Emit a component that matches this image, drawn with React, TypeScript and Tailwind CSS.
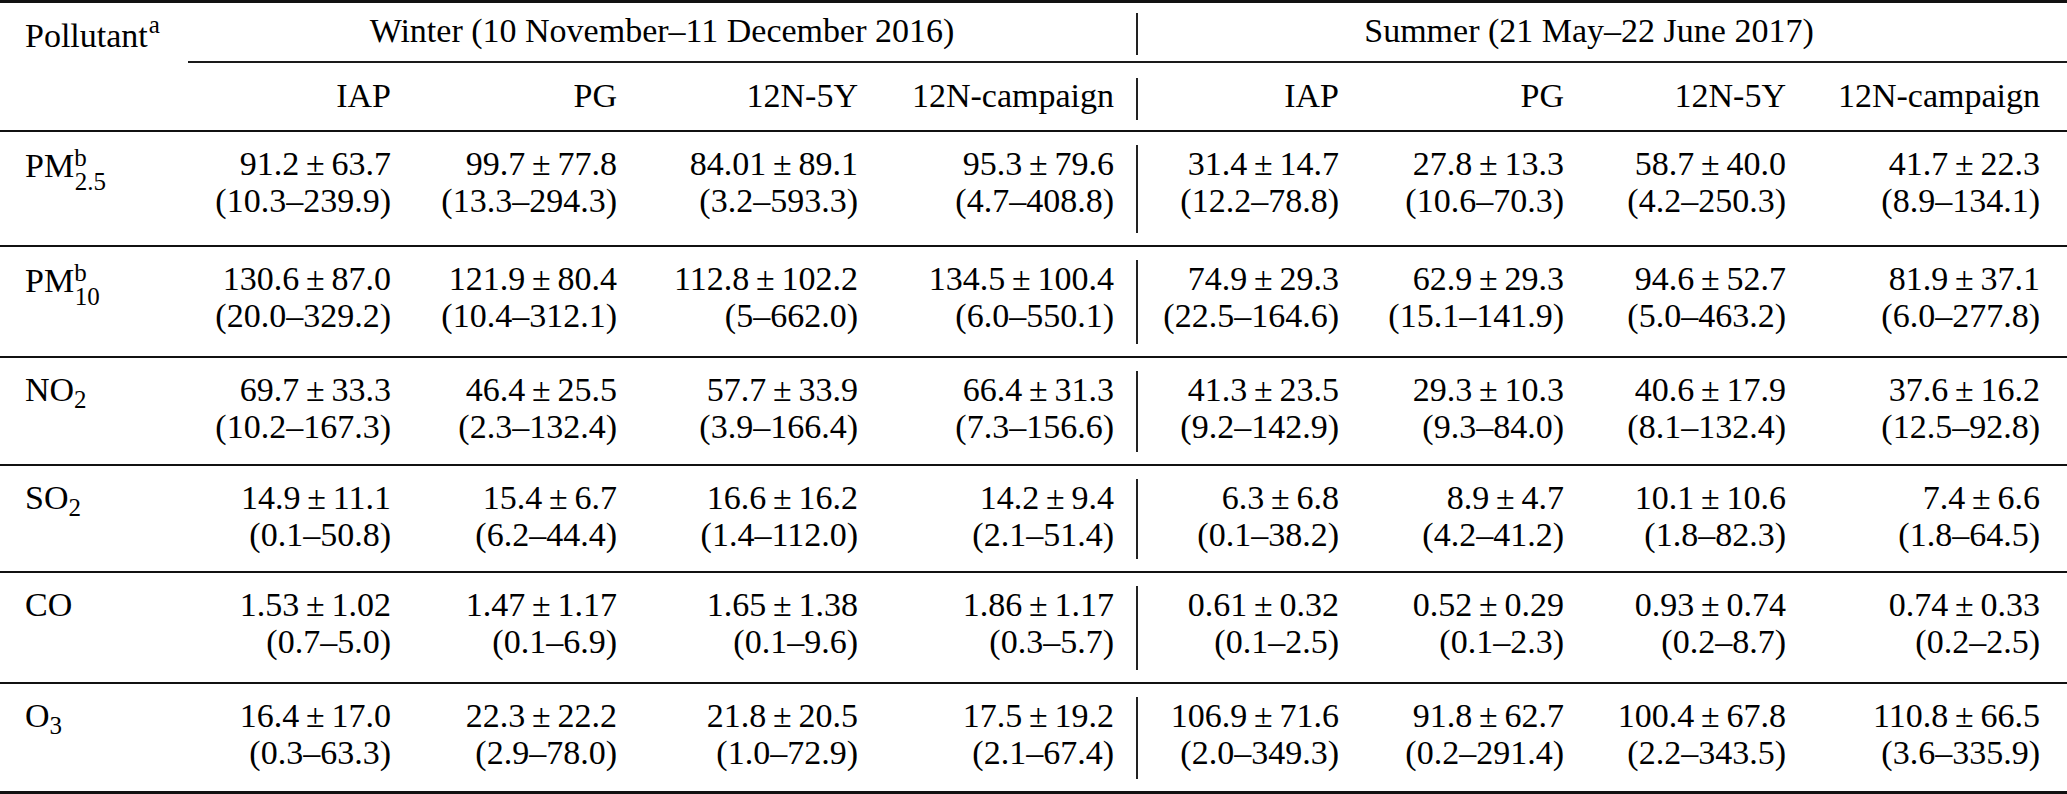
type Cell = [string, string, string]

type Row = {
  key: string
  label: React.ReactNode
  height: string
  cells: Cell[]
}

const rows: Row[] = [
  {
    key: 'pm25',
    height: 'h-[115px]',
    label: (
      <>
        PM
        <span className="text-[25px] leading-none align-[11px]">b</span>
        <span className="-ml-[12px] text-[25px] leading-none align-[-13px]">2.5</span>
      </>
    ),
    cells: [
      ['91.2', '63.7', '10.3–239.9'],
      ['99.7', '77.8', '13.3–294.3'],
      ['84.01', '89.1', '3.2–593.3'],
      ['95.3', '79.6', '4.7–408.8'],
      ['31.4', '14.7', '12.2–78.8'],
      ['27.8', '13.3', '10.6–70.3'],
      ['58.7', '40.0', '4.2–250.3'],
      ['41.7', '22.3', '8.9–134.1'],
    ],
  },
  {
    key: 'pm10',
    height: 'h-[111px]',
    label: (
      <>
        PM
        <span className="text-[25px] leading-none align-[11px]">b</span>
        <span className="-ml-[12px] text-[25px] leading-none align-[-13px]">10</span>
      </>
    ),
    cells: [
      ['130.6', '87.0', '20.0–329.2'],
      ['121.9', '80.4', '10.4–312.1'],
      ['112.8', '102.2', '5–662.0'],
      ['134.5', '100.4', '6.0–550.1'],
      ['74.9', '29.3', '22.5–164.6'],
      ['62.9', '29.3', '15.1–141.9'],
      ['94.6', '52.7', '5.0–463.2'],
      ['81.9', '37.1', '6.0–277.8'],
    ],
  },
  {
    key: 'no2',
    height: 'h-[108px]',
    label: (
      <>
        NO<span className="text-[25px] leading-none align-[-7px]">2</span>
      </>
    ),
    cells: [
      ['69.7', '33.3', '10.2–167.3'],
      ['46.4', '25.5', '2.3–132.4'],
      ['57.7', '33.9', '3.9–166.4'],
      ['66.4', '31.3', '7.3–156.6'],
      ['41.3', '23.5', '9.2–142.9'],
      ['29.3', '10.3', '9.3–84.0'],
      ['40.6', '17.9', '8.1–132.4'],
      ['37.6', '16.2', '12.5–92.8'],
    ],
  },
  {
    key: 'so2',
    height: 'h-[107px]',
    label: (
      <>
        SO<span className="text-[25px] leading-none align-[-7px]">2</span>
      </>
    ),
    cells: [
      ['14.9', '11.1', '0.1–50.8'],
      ['15.4', '6.7', '6.2–44.4'],
      ['16.6', '16.2', '1.4–112.0'],
      ['14.2', '9.4', '2.1–51.4'],
      ['6.3', '6.8', '0.1–38.2'],
      ['8.9', '4.7', '4.2–41.2'],
      ['10.1', '10.6', '1.8–82.3'],
      ['7.4', '6.6', '1.8–64.5'],
    ],
  },
  {
    key: 'co',
    height: 'h-[111px]',
    label: 'CO',
    cells: [
      ['1.53', '1.02', '0.7–5.0'],
      ['1.47', '1.17', '0.1–6.9'],
      ['1.65', '1.38', '0.1–9.6'],
      ['1.86', '1.17', '0.3–5.7'],
      ['0.61', '0.32', '0.1–2.5'],
      ['0.52', '0.29', '0.1–2.3'],
      ['0.93', '0.74', '0.2–8.7'],
      ['0.74', '0.33', '0.2–2.5'],
    ],
  },
  {
    key: 'o3',
    height: 'h-[109px]',
    label: (
      <>
        O<span className="text-[25px] leading-none align-[-7px]">3</span>
      </>
    ),
    cells: [
      ['16.4', '17.0', '0.3–63.3'],
      ['22.3', '22.2', '2.9–78.0'],
      ['21.8', '20.5', '1.0–72.9'],
      ['17.5', '19.2', '2.1–67.4'],
      ['106.9', '71.6', '2.0–349.3'],
      ['91.8', '62.7', '0.2–291.4'],
      ['100.4', '67.8', '2.2–343.5'],
      ['110.8', '66.5', '3.6–335.9'],
    ],
  },
]

const stations = ['IAP', 'PG', '12N-5Y', '12N-campaign']

// 188 | 4 winter cols | 22 + 22 (divider sits between) | 4 summer cols
const grid =
  'grid grid-cols-[188px_203px_226px_241px_256px_22px_22px_181px_225px_222px_254px] pr-[27px]'

export default function App() {
  return (
    <div
      className="w-[2067px] h-[794px] bg-white text-black text-[34px] leading-[37px]"
      style={{ fontFamily: '"Liberation Serif", "Times New Roman", serif' }}
    >
      <div className="h-[3px] bg-[#111]" />

      {/* season header */}
      <div className={`${grid} h-[58px]`}>
        <div className="pl-[25px] pt-[9px]">
          Pollutant<span className="ml-[1px] text-[25px] leading-none align-[14px]">a</span>
        </div>
        <div className="col-span-5 pt-[9px] text-center">Winter (10 November–11 December 2016)</div>
        <div className="col-span-5 flex">
          <div className="mt-[10px] mb-[6px] border-l-2 border-[#222]" />
          <div className="flex-1 pt-[9px] text-center">Summer (21 May–22 June 2017)</div>
        </div>
      </div>
      <div className="ml-[188px] h-[2px] bg-[#1a1a1a]" />

      {/* station header */}
      <div className={`${grid} h-[67px]`}>
        <div />
        {stations.map((s) => (
          <div key={'w' + s} className="pt-[14px] text-right">{s}</div>
        ))}
        <div />
        <div className="mt-[15px] mb-[10px] border-l-2 border-[#222]" />
        {stations.map((s) => (
          <div key={'s' + s} className="pt-[14px] text-right">{s}</div>
        ))}
      </div>

      {rows.map((r) => (
        <div key={r.key} className={`${r.height} border-t-2 border-[#111]`}>
          <div className={`${grid} h-full`}>
            <div className="pl-[25px] pt-[13px]">{r.label}</div>
            {r.cells.slice(0, 4).map((c, i) => (
              <ValueCell key={i} cell={c} />
            ))}
            <div />
            <div className="mt-[13px] mb-[12px] border-l-2 border-[#222]" />
            {r.cells.slice(4).map((c, i) => (
              <ValueCell key={i} cell={c} />
            ))}
          </div>
        </div>
      ))}

      <div className="h-[3px] bg-[#111]" />
    </div>
  )
}

function ValueCell({ cell }: { cell: Cell }) {
  const [mean, sd, range] = cell
  return (
    <div className="pt-[13px] text-right">
      <div>
        {mean}
        <span className="mx-[0.2em]">±</span>
        {sd}
      </div>
      <div>({range})</div>
    </div>
  )
}
